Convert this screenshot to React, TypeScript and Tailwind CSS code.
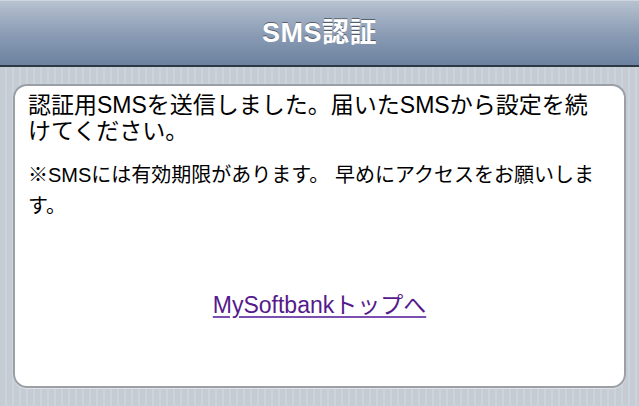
export default function App() {
  return (
    <div
      className="w-[639px] h-[406px] overflow-hidden flex flex-col bg-[repeating-linear-gradient(90deg,#c5ccd4_0px,#c5ccd4_5px,#cdd3da_5px,#cdd3da_7px)]"
      style={{ fontFamily: '"Liberation Sans", Arial, "Noto Sans CJK JP", sans-serif' }}
    >
      {/* Nav bar */}
      <header className="h-[67px] shrink-0 flex items-center justify-center bg-gradient-to-b from-[#b8c2d0] via-[#8c9db5] to-[#6c82a0] border-t border-t-[#cdd5df] border-b-2 border-b-[#2e3744]">
        <h1 className="text-[27px] font-bold text-white tracking-[0.5px] [text-shadow:0_-1px_0_rgba(0,0,0,0.45)]">
          SMS認証
        </h1>
      </header>

      {/* Content */}
      <main className="px-[13px] pt-[17px]">
        <div className="h-[304px] rounded-[14px] border-2 border-[#9ba0a7] bg-white pl-[13px] pr-[22px] pt-[6px] shadow-[0_1px_0_#dfe3e8] flex flex-col">
          <p className="text-[23px] leading-[26px] text-black">
            認証用SMSを送信しました。届いたSMSから設定を続けてください。
          </p>
          <p className="mt-[16px] text-[20px] leading-[31px] text-black">
            ※SMSには有効期限があります。 早めにアクセスをお願いします。
          </p>
          <div className="mt-[70px] text-center pl-[9px]">
            <a href="#" className="text-[23px] leading-[26px] text-[#551a8b] underline decoration-[#7a4fb0] underline-offset-[3px]">
              MySoftbankトップへ
            </a>
          </div>
        </div>
      </main>
    </div>
  );
}
